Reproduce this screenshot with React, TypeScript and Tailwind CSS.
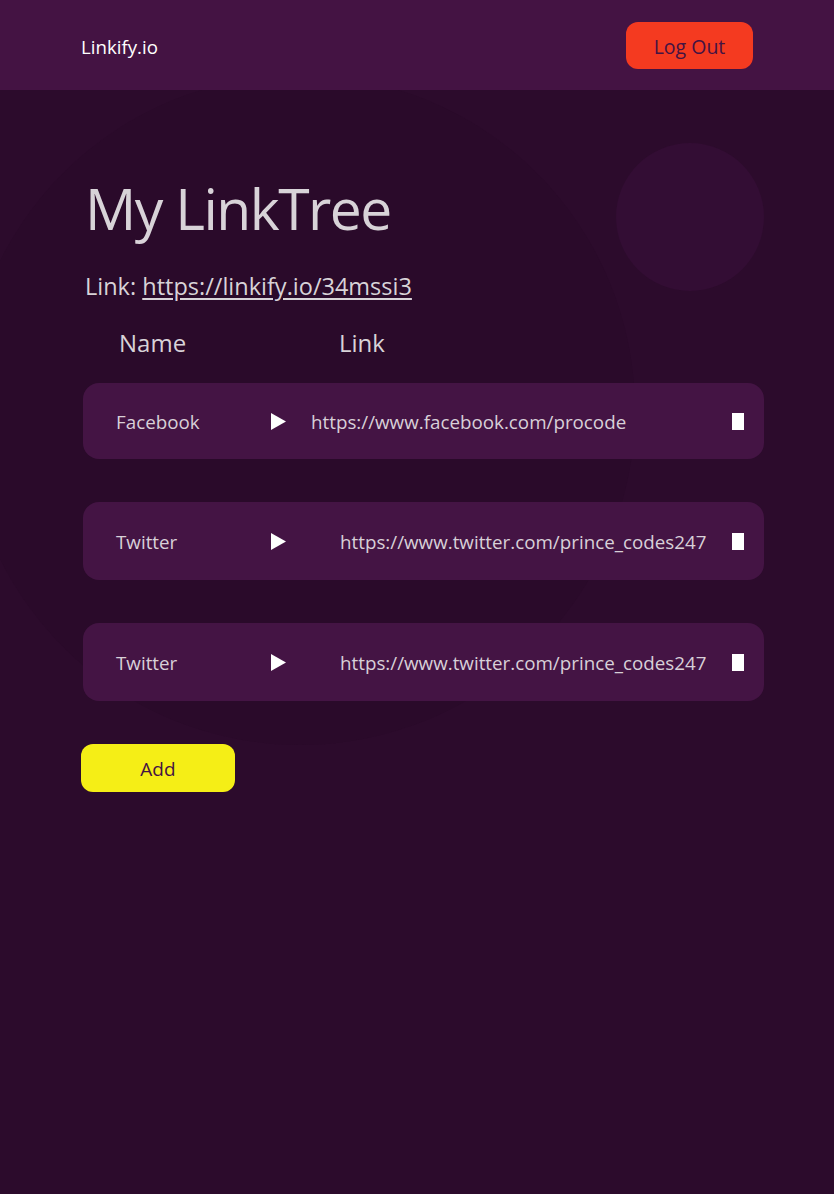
import React from "react";

const rows = [
  { name: "Facebook", url: "https://www.facebook.com/procode", urlClass: "ml-[25px]", h: "h-[76px]", mt: "mt-0" },
  { name: "Twitter", url: "https://www.twitter.com/prince_codes247", urlClass: "ml-[54px]", h: "h-[78px]", mt: "mt-[43px]" },
  { name: "Twitter", url: "https://www.twitter.com/prince_codes247", urlClass: "ml-[54px]", h: "h-[78px]", mt: "mt-[43px]" },
];

function Play() {
  return (
    <svg width="15" height="17" viewBox="0 0 15 17" className="shrink-0">
      <path d="M0 0 L15 8.5 L0 17 Z" fill="#ffffff" />
    </svg>
  );
}

export default function App() {
  return (
    <div className="relative min-h-[1194px] w-full overflow-hidden bg-[#2c0b2c] font-['Open_Sans','Noto_Sans',sans-serif]">
      {/* decorative background shapes */}
      <div className="pointer-events-none absolute left-[-35px] top-[75px] h-[670px] w-[670px] rounded-full bg-[#2a0a29] opacity-70" />
      <div className="pointer-events-none absolute left-[616px] top-[143px] h-[148px] w-[148px] rounded-full bg-[#330d34]" />

      <header className="relative flex h-[90px] items-center justify-between bg-[#441343] px-[81px]">
        <span className="mt-[4px] text-[18.7px] text-white">Linkify.io</span>
        <button className="flex h-[47px] w-[127px] items-center justify-center rounded-[12px] bg-[#f43a20] pt-[4px] text-[19.5px] text-[#441343]">
          Log Out
        </button>
      </header>

      <main className="relative pl-[83px]">
        <h1 className="mt-[78px] pl-[2px] text-[57px] leading-[80px] tracking-[-1.5px] text-[#d8d3d8]">My LinkTree</h1>
        <p className="mt-[22px] pl-[2px] text-[23.5px] leading-[32px] text-[#d8d3d8]">
          Link: <span className="underline underline-offset-[3px]">https://linkify.io/34mssi3</span>
        </p>
        <div className="mt-[25px] flex text-[24px] leading-[32px] text-[#d8d3d8]">
          <span className="ml-[36px] w-[220px]">Name</span>
          <span>Link</span>
        </div>

        <div className="mt-[24px] w-[681px]">
          {rows.map((r, i) => (
            <div
              key={i}
              className={`${r.mt} ${r.h} flex items-center rounded-[16px] bg-[#441444] pl-[33px] pr-[20px] pt-[3px] text-[18.8px] text-[#d8d0d8]`}
            >
              <span className="w-[155px] shrink-0">{r.name}</span>
              <span className="-mt-[3px] flex"><Play /></span>
              <span className={`${r.urlClass} flex-1 whitespace-nowrap`}>{r.url}</span>
              <span className="-mt-[3px] h-[17px] w-[12px] shrink-0 bg-white" />
            </div>
          ))}
        </div>

        <button className="ml-[-2px] mt-[43px] flex h-[48px] w-[154px] items-center justify-center rounded-[12px] bg-[#f5ee16] pt-[3px] text-[19px] text-[#441343]">
          Add
        </button>
      </main>
    </div>
  );
}
